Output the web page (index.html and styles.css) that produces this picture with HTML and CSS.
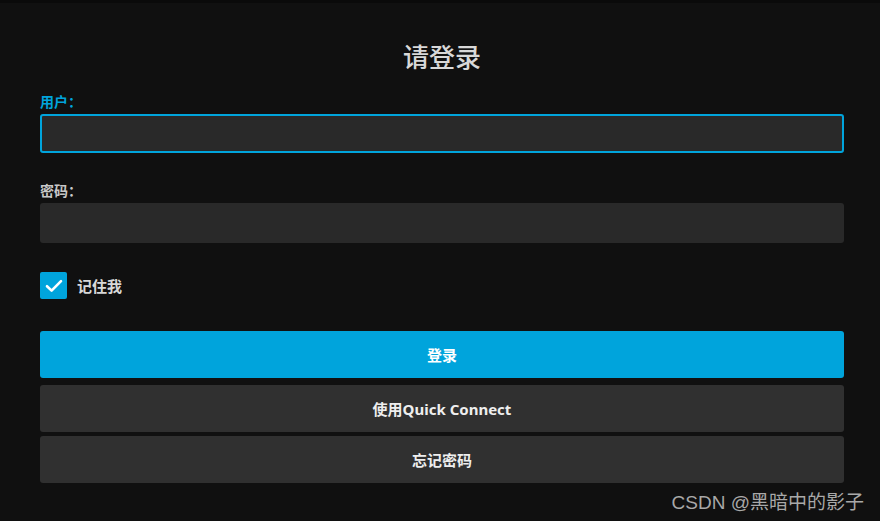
FILE: index.html
```html
<!DOCTYPE html>
<html lang="zh">
<head>
<meta charset="utf-8">
<title>请登录</title>
<link rel="stylesheet" href="styles.css">
</head>
<body>
<div class="topbar"></div>
<main class="page">
  <h1 class="title">请登录</h1>
  <form class="form">
    <div class="field">
      <label class="label label-active">用户：</label>
      <div class="input input-focus"></div>
    </div>
    <div class="field">
      <label class="label">密码：</label>
      <div class="input"></div>
    </div>
    <div class="remember">
      <span class="checkbox">
        <svg width="18" height="14" viewBox="0 0 18 14"><path d="M2 7.2 L6.6 11.6 L16 2.2" fill="none" stroke="#fff" stroke-width="2.6" stroke-linecap="round" stroke-linejoin="round"/></svg>
      </span>
      <span class="remember-text">记住我</span>
    </div>
    <div class="buttons">
      <div class="btn btn-primary">登录</div>
      <div class="btn btn-secondary btn-qc">使用Quick Connect</div>
      <div class="btn btn-secondary">忘记密码</div>
    </div>
  </form>
</main>
<div class="watermark">CSDN @黑暗中的影子</div>
</body>
</html>
```
FILE: styles.css
```css
html, body {
  margin: 0;
  padding: 0;
  background: #101010;
  height: 100%;
  overflow: hidden;
}
body {
  font-family: "Noto Sans", "Noto Sans CJK SC", sans-serif;
  color: #ddd;
  position: relative;
}
.topbar {
  height: 3px;
  background: #0a0a0a;
}
.page {
  padding: 0 36px 0 40px;
}
.title {
  margin: 0;
  padding-top: 34px;
  height: 40px;
  line-height: 40px;
  text-align: center;
  font-size: 26px;
  font-weight: 500;
  color: #d8d8d8;
}
.form {
  display: flex;
  flex-direction: column;
}
.field {
  display: flex;
  flex-direction: column;
}
.field:first-child {
  margin-top: 16px;
}
.field + .field {
  margin-top: 29px;
}
.label {
  font-size: 14px;
  font-weight: 700;
  line-height: 18px;
  height: 18px;
  margin-bottom: 3px;
  color: #c8c8c8;
}
.label-active {
  color: #00a4dc;
}
.input {
  height: 40px;
  box-sizing: border-box;
  background: #292929;
  border-radius: 3px;
}
.input-focus {
  border: 2px solid #00a4dc;
  height: 39px;
}
.remember {
  display: flex;
  align-items: center;
  margin-top: 29px;
  gap: 10px;
}
.checkbox {
  width: 27px;
  height: 27px;
  background: #00a4dc;
  border-radius: 2px;
  display: flex;
  align-items: center;
  justify-content: center;
}
.remember-text {
  font-size: 15px;
  font-weight: 700;
  color: #d8d8d8;
}
.buttons {
  display: flex;
  flex-direction: column;
  margin-top: 32px;
}
.btn {
  height: 47px;
  display: flex;
  align-items: center;
  justify-content: center;
  border-radius: 3px;
  font-size: 15px;
  font-weight: 700;
  color: #eee;
}
.btn-primary {
  background: #00a4dc;
  color: #fff;
}
.btn-secondary {
  background: #303030;
  margin-top: 4px;
}
.btn-qc {
  margin-top: 7px;
}
.watermark {
  position: absolute;
  right: 16px;
  bottom: 7px;
  font-family: "Liberation Sans", "Noto Sans CJK SC", sans-serif;
  font-size: 19px;
  color: rgba(220, 220, 220, 0.75);
}
```
